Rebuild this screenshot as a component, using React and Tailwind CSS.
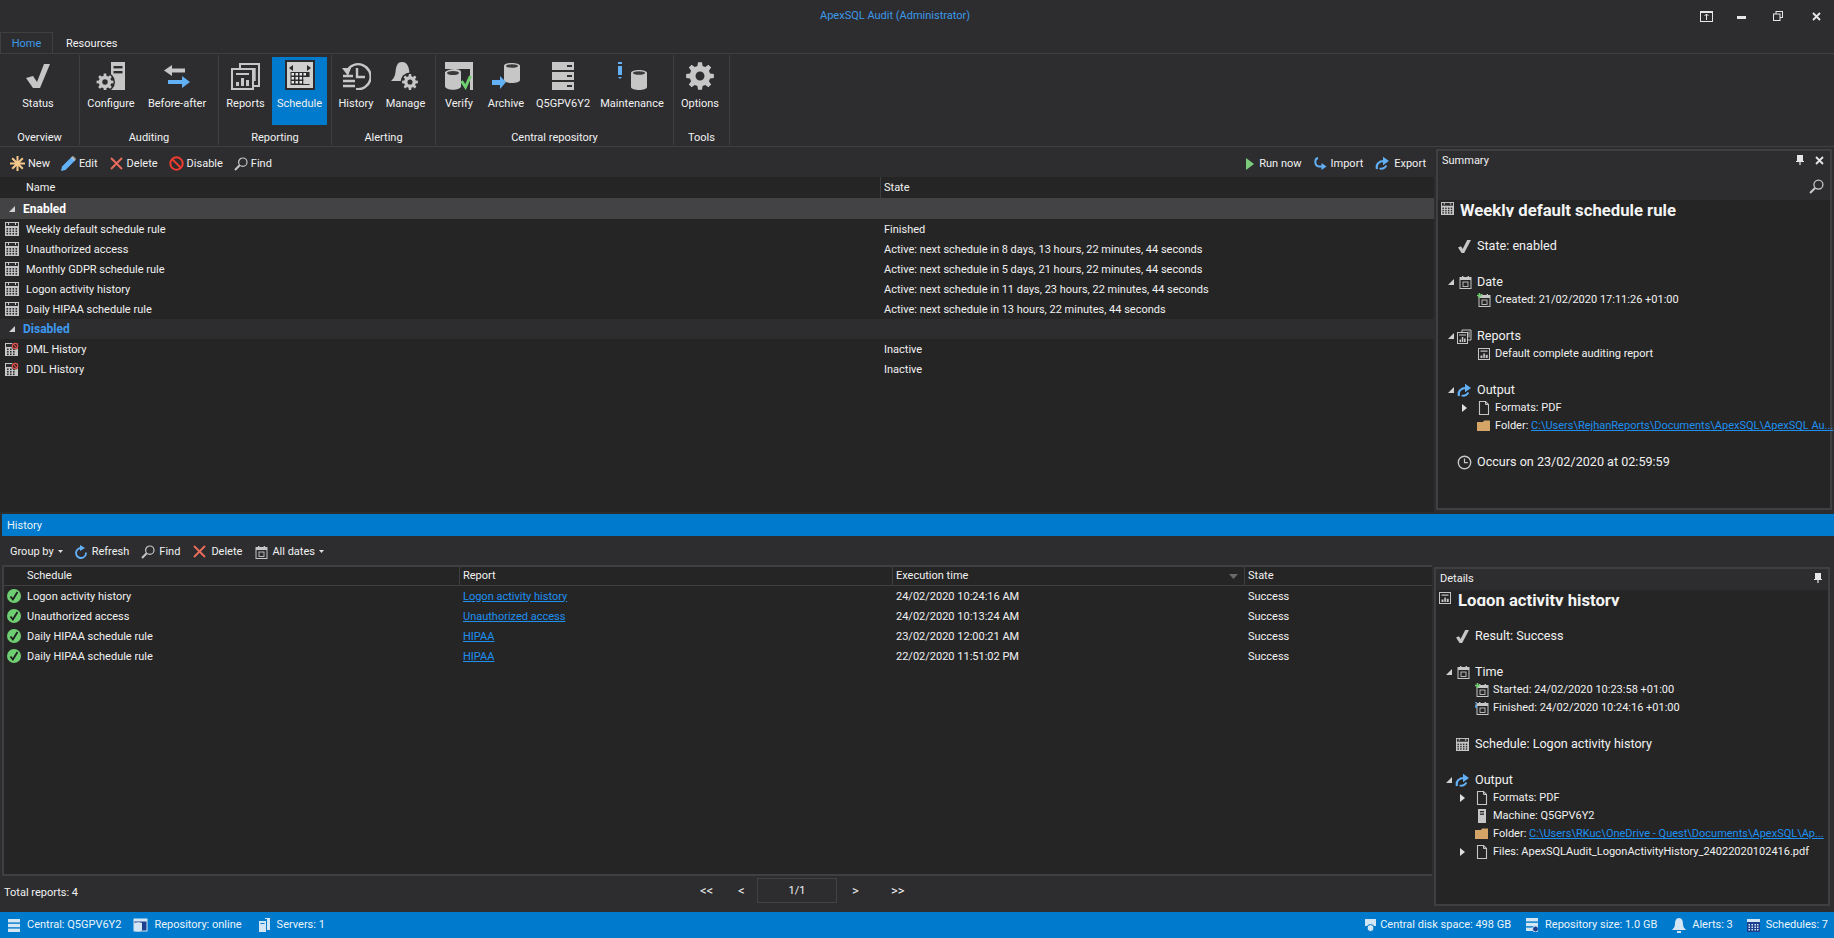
import React from "react";

const G = "#c6c6c6";
const B = "#62b1f6";
const D = "#2d2d30";

const Svg = ({ w = 16, h = 16, vb, children }) => (
  <svg width={w} height={h} viewBox={vb || `0 0 ${w} ${h}`} className="block shrink-0">{children}</svg>
);

const gearPath = (cx, cy, R, r, hole, teeth = 8) => {
  let d = "";
  const step = (Math.PI * 2) / teeth;
  for (let i = 0; i < teeth; i++) {
    const a = i * step - Math.PI / 2;
    const pts = [[r, a - step * 0.32], [R, a - step * 0.18], [R, a + step * 0.18], [r, a + step * 0.32]];
    pts.forEach(([q, t], j) => {
      d += `${i === 0 && j === 0 ? "M" : "L"}${(cx + q * Math.cos(t)).toFixed(2)} ${(cy + q * Math.sin(t)).toFixed(2)}`;
    });
  }
  d += `Z M${cx + hole} ${cy} a${hole} ${hole} 0 1 0 ${-2 * hole} 0 a${hole} ${hole} 0 1 0 ${2 * hole} 0Z`;
  return d;
};

const Gear = ({ cx, cy, r, color = G, halo }) => (
  <g>
    {halo && <circle cx={cx} cy={cy} r={r + 1.5} fill={halo} />}
    <path d={gearPath(cx, cy, r, r * 0.74, r * 0.32)} fill={color} fillRule="evenodd" />
  </g>
);

const Cyl = ({ x, y, w, h, color = G, top = "#3a3a3d" }) => (
  <g>
    <path d={`M${x} ${y + 3}v${h - 6}c0 4 ${w} 4 ${w} 0v-${h - 6}c0-4-${w}-4-${w} 0z`} fill={color} />
    <ellipse cx={x + w / 2} cy={y + 3} rx={w / 2 - 2} ry={1.8} fill={top} />
  </g>
);

const Calendar = ({ size = 14, dark = D, light = G }) => (
  <svg width={size} height={size} viewBox="0 0 14 14" className="block shrink-0">
    <rect x="0" y="0" width="14" height="14" fill={light} />
    <rect x="1" y="1" width="12" height="3" fill={dark} />
    <rect x="3" y="0" width="1" height="3" fill={light} />
    <rect x="10" y="0" width="1" height="3" fill={light} />
    <rect x="1" y="5" width="12" height="8" fill={light} />
    {[2, 5, 8, 11].map((x) => [6, 8.5, 11].map((y) => <rect key={x + "-" + y} x={x - 0.5} y={y} width="1.6" height="1.6" fill={dark} />))}
  </svg>
);

const CalDisabled = () => (
  <svg width="14" height="14" viewBox="0 0 14 14" className="block shrink-0">
    <rect x="0" y="1" width="13" height="13" fill={G} />
    <rect x="1" y="2" width="11" height="3" fill={D} />
    {[2, 5, 8].map((x) => [6.5, 9, 11.5].map((y) => <rect key={x + "-" + y} x={x} y={y} width="1.6" height="1.6" fill={D} />))}
    <circle cx="10" cy="4" r="3.4" fill="#252526" />
    <circle cx="10" cy="4" r="2.7" fill="none" stroke="#e4504a" strokeWidth="1.2" />
    <path d="M8.2 2.2l3.6 3.6" stroke="#e4504a" strokeWidth="1.1" />
  </svg>
);

const SmallCal = ({ plus, info }) => (
  <svg width="14" height="14" viewBox="0 0 14 14" className="block shrink-0">
    <rect x="2" y="2.5" width="11" height="11" fill="none" stroke={G} strokeWidth="1" />
    <rect x="2" y="2" width="11" height="3" fill={G} />
    <rect x="4" y="1" width="1.4" height="3" fill={G} /><rect x="9.6" y="1" width="1.4" height="3" fill={G} />
    <rect x="5" y="7" width="5" height="4.5" fill="none" stroke={G} strokeWidth="0.9" />
    {plus && <path d="M2.5 0v5M0 2.5h5" stroke="#6fcf6f" strokeWidth="1.6" />}
    {info && <path d="M1 1v1.2M1 3.5v3.5" stroke={B} strokeWidth="1.6" />}
  </svg>
);

const Doc = () => (
  <svg width="12" height="14" viewBox="0 0 12 14" className="block shrink-0">
    <path d="M1.5.5h6l3 3v10h-9z" fill="none" stroke={G} strokeWidth="1.1" />
    <path d="M7.5.5v3h3" fill="none" stroke={G} strokeWidth="1" />
  </svg>
);
const Folder = () => (
  <svg width="14" height="12" viewBox="0 0 14 12" className="block shrink-0">
    <path d="M0 2h6l1-1.5h6V11H0z" fill="#d4a566" />
  </svg>
);
const SmallReport = () => (
  <svg width="12" height="12" viewBox="0 0 12 12" className="block shrink-0">
    <rect x=".5" y=".5" width="11" height="11" fill="none" stroke={G} />
    <rect x="2.5" y="2.5" width="7" height="1.2" fill={G} />
    <rect x="2.5" y="7.5" width="2" height="2.5" fill={G} /><rect x="5.3" y="5.5" width="1.6" height="4.5" fill={G} /><rect x="7.7" y="6.8" width="2" height="3.2" fill={G} />
  </svg>
);
const Reports16 = () => (
  <svg width="15" height="15" viewBox="0 0 15 15" className="block shrink-0">
    <path d="M5 3V1h9v10h-3" fill="none" stroke={G} strokeWidth="1" />
    <path d="M12 2.5v6" stroke={G} strokeWidth="1" />
    <rect x=".5" y="3.5" width="10" height="11" fill="none" stroke={G} />
    <rect x="2" y="5.5" width="7" height="1" fill={G} />
    <rect x="2.5" y="10.5" width="1.6" height="2.5" fill={G} /><rect x="4.8" y="8" width="1.5" height="5" fill={G} /><rect x="7" y="9.5" width="1.6" height="3.5" fill={G} />
  </svg>
);
const ExportIcon = ({ s = 15 }) => (
  <svg width={s} height={s} viewBox="0 0 15 15" className="block shrink-0">
    <path d="M2 13C.8 8 4 5 9 5" fill="none" stroke={B} strokeWidth="2.2" />
    <path d="M8 .8L14 5l-6 4.2z" fill={B} />
    <path d="M4.5 12.5c3 .8 5.5-.5 7-3" fill="none" stroke={B} strokeWidth="1.8" />
  </svg>
);
const Clock = () => (
  <svg width="15" height="15" viewBox="0 0 15 15" className="block shrink-0">
    <circle cx="7.5" cy="7.5" r="6.2" fill="none" stroke={G} strokeWidth="1.4" />
    <path d="M7.5 3.5v4.2h3.3" fill="none" stroke={G} strokeWidth="1.2" />
  </svg>
);
const SmallCheck = () => (
  <svg width="13" height="13" viewBox="0 0 13 13" className="block shrink-0">
    <path d="M0 7.5L3 6.3 4.6 9 9.2 0H13L6.2 13H3.6z" fill={G} />
  </svg>
);
const SearchIco = ({ s = 14 }) => (
  <svg width={s} height={s} viewBox="0 0 14 14" className="block shrink-0">
    <circle cx="8.8" cy="5.2" r="4.2" fill="none" stroke={G} strokeWidth="1.2" />
    <path d="M5.7 8.3L1 13" stroke={G} strokeWidth="2" />
  </svg>
);
const XIco = ({ s = 15 }) => (
  <svg width={s} height={s} viewBox="0 0 15 15" className="block shrink-0">
    <path d="M2 2l11 11M13 2L2 13" stroke="#e86d5c" strokeWidth="1.9" />
  </svg>
);
const SuccessIco = () => (
  <svg width="14" height="14" viewBox="0 0 14 14" className="block shrink-0">
    <circle cx="7" cy="7" r="7" fill="#6fce72" />
    <path d="M3.5 7.5l2.4 3L10.5 3" fill="none" stroke="#1e1e1e" strokeWidth="1.8" />
  </svg>
);
const Pin = () => (
  <svg width="8" height="10" viewBox="0 0 8 10" className="block shrink-0">
    <path d="M1 0h6v6h1v1H4.6v3h-1.2V7H0V6h1z" fill="#e6e6e6" />
  </svg>
);
const CloseSm = () => (
  <svg width="9" height="9" viewBox="0 0 9 9" className="block shrink-0">
    <path d="M1 1l7 7M8 1L1 8" stroke="#e6e6e6" strokeWidth="1.8" />
  </svg>
);
const Caret = ({ open }) =>
  open ? (
    <svg width="6" height="6" viewBox="0 0 6 6" className="block shrink-0"><path d="M6 0v6H0z" fill="#d0d0d0" /></svg>
  ) : (
    <svg width="5" height="8" viewBox="0 0 5 8" className="block shrink-0"><path d="M0 0l5 4-5 4z" fill="#e0e0e0" /></svg>
  );
const DropCaret = () => (
  <svg width="5" height="3" viewBox="0 0 5 3" className="block shrink-0"><path d="M0 0h5L2.5 3z" fill="#e0e0e0" /></svg>
);

/* ribbon icons */
const IcoStatus = () => <Svg w={24} h={24}><path d="M0 14l7-2 4 6L18 0h6L14 24H7z" fill={G} /></Svg>;
const IcoConfigure = () => (
  <Svg w={30} h={28}>
    <path d="M15 0h14v28H15z" fill={G} />
    <rect x="17.5" y="4" width="9" height="2.4" fill={D} /><rect x="17.5" y="9" width="9" height="2.4" fill={D} />
    <Gear cx={9} cy={20} r={8.5} halo={D} />
  </Svg>
);
const IcoBefore = () => (
  <Svg w={28} h={23}>
    <path d="M9 0L1 5.5 9 11V7.500h13v-4H9z" fill={G} />
    <path d="M19 11l8 6-8 6V19H5v-4h14z" fill={B} />
  </Svg>
);
const IcoReports = () => (
  <Svg w={29} h={28}>
    <path d="M9 6V2h19v22h-6" fill="none" stroke={G} strokeWidth="2" />
    <path d="M23.5 6v13" stroke={G} strokeWidth="2.4" />
    <rect x="1" y="7" width="21" height="20" fill={D} stroke={G} strokeWidth="2" />
    <rect x="5" y="11" width="13" height="2" fill={G} />
    <rect x="5" y="20" width="3" height="4" fill={G} /><rect x="10" y="16" width="3" height="8" fill={G} /><rect x="15" y="18" width="3" height="6" fill={G} />
  </Svg>
);
const IcoSchedule = () => (
  <Svg w={30} h={30}>
    <rect width="30" height="30" fill="#2b2b2d" />
    <rect x="2" y="2" width="26" height="26" fill="#cfcfcf" />
    <path d="M8 5l-4 3 4 3zM22 5l4 3-4 3z" fill="#2b2b2d" />
    <rect x="5.5" y="12" width="19" height="13" fill="#2b2b2d" />
    {[6.5, 10.5, 14.5, 18.5].map((x) => [13, 17, 21].map((y) => <rect key={x + "-" + y} x={x} y={y} width="2.5" height="2.5" fill="#e6e6e6" />))}
    <rect x="18.5" y="17" width="6.5" height="7" fill="#cfcfcf" />
  </Svg>
);
const IcoHistory = () => (
  <Svg w={29} h={28}>
    <path d="M5 9a12.5 12.5 0 1 1 9 18" fill="none" stroke={G} strokeWidth="2.4" />
    <path d="M0 6l9 0-3 8z" fill={G} />
    <path d="M15 6v9h8" fill="none" stroke={G} strokeWidth="2.4" />
    <path d="M1 14h10M1 19h12M1 24h12" stroke={G} strokeWidth="2.4" />
  </Svg>
);
const IcoManage = () => (
  <Svg w={29} h={28}>
    <path d="M11 0c6 0 7 6 7.500 11 .5 4 3 6 4.500 8H0c3-3 4-5 4.500-9C5 5 6 0 11 0z" fill={G} />
    <circle cx="19" cy="20" r="9.500" fill={D} />
    <Gear cx={19} cy={20} r={8} />
  </Svg>
);
const IcoVerify = () => (
  <Svg w={28} h={28}>
    <path d="M0 0h28v28h-3V7H0z" fill={G} />
    <path d="M0 10c4-4 16-4 16 0v14c0 5-16 5-16 0z" fill={G} />
    <ellipse cx="8" cy="11" rx="6" ry="2" fill="#3a3a3d" />
    <path d="M16.500 19l4 6 5-11" fill="none" stroke="#6fcf6f" strokeWidth="3" />
  </Svg>
);
const IcoArchive = () => (
  <Svg w={28} h={28}>
    <Cyl x={12} y={1} w={16} h={20} />
    <path d="M8 14l6 6-6 7v-4H0v-5h8z" fill={B} />
  </Svg>
);
const IcoServers = () => (
  <Svg w={22} h={28}>
    {[0, 10, 20].map((y) => (
      <g key={y}><rect x="0" y={y} width="22" height="8" fill={G} /><rect x="15" y={y + 3} width="5" height="2" fill={D} /></g>
    ))}
  </Svg>
);
const IcoMaint = () => (
  <Svg w={30} h={28}>
    <rect x="1" y="0" width="4" height="2" fill={B} />
    <rect x="1" y="4" width="4" height="9" fill={B} />
    <path d="M1 15h4l-2 2z" fill={B} />
    <Cyl x={14} y={8} w={16} h={20} />
  </Svg>
);
const IcoOptions = () => <Svg w={28} h={28}><Gear cx={14} cy={14} r={14} /></Svg>;

const text = "text-[11px] leading-[16px] text-[#f1f1f1] whitespace-nowrap";

const RibBtn = ({ w, label, icon, active, top = "pt-[5px]" }) => (
  <div className={`${w} h-[68px] flex flex-col items-center ${active ? "bg-[#007acc]" : ""}`}>
    <div className={`h-[39px] ${top} flex items-start justify-center`}>{icon}</div>
    <div className={text}>{label}</div>
  </div>
);

const RibGroup = ({ w, label, children }) => (
  <div className={`${w} h-[90px] flex flex-col border-r border-[#3f3f42]`}>
    <div className="flex h-[68px] mt-[2px]">{children}</div>
    <div className={`${text} text-center mt-[5px]`}>{label}</div>
  </div>
);

const Ribbon = () => (
  <div className="h-[93px] flex border-b border-[#3f3f42] pt-[1px]">
    <RibGroup w="w-[80px]" label="Overview"><RibBtn w="w-[76px]" label="Status" icon={<IcoStatus />} top="pt-[7px]" /></RibGroup>
    <RibGroup w="w-[139px]" label="Auditing">
      <RibBtn w="w-[62px]" label="Configure" icon={<IcoConfigure />} />
      <RibBtn w="w-[70px]" label="Before-after" icon={<IcoBefore />} top="pt-[8px]" />
    </RibGroup>
    <RibGroup w="w-[113px]" label="Reporting">
      <RibBtn w="w-[53px]" label="Reports" icon={<IcoReports />} />
      <RibBtn w="w-[55px]" label="Schedule" icon={<IcoSchedule />} active top="pt-[3px]" />
    </RibGroup>
    <RibGroup w="w-[104px]" label="Alerting">
      <RibBtn w="w-[48px]" label="History" icon={<IcoHistory />} />
      <RibBtn w="w-[51px]" label="Manage" icon={<IcoManage />} />
    </RibGroup>
    <RibGroup w="w-[238px]" label="Central repository">
      <RibBtn w="w-[46px]" label="Verify" icon={<IcoVerify />} />
      <RibBtn w="w-[48px]" label="Archive" icon={<IcoArchive />} />
      <RibBtn w="w-[66px]" label="Q5GPV6Y2" icon={<IcoServers />} />
      <RibBtn w="w-[72px]" label="Maintenance" icon={<IcoMaint />} />
    </RibGroup>
    <RibGroup w="w-[56px]" label="Tools"><RibBtn w="w-[52px]" label="Options" icon={<IcoOptions />} /></RibGroup>
  </div>
);

const Tool = ({ icon, label, after, gap = "gap-[3px]" }) => (
  <div className={`flex items-center ${gap}`}>
    {icon}
    <span className={text}>{label}</span>
    {after}
  </div>
);

const NewIco = () => (
  <svg width="15" height="15" viewBox="0 0 15 15" className="block shrink-0">
    <path d="M7.500 0v15M0 7.500h15M2.200 2.200l10.600 10.600M12.800 2.200L2.200 12.800" stroke="#f3c98b" strokeWidth="2" />
  </svg>
);
const EditIco = () => (
  <svg width="15" height="15" viewBox="0 0 15 15" className="block shrink-0">
    <path d="M0 15l1-4.500L10.500 1l3.500 3.500L4.500 14z" fill={B} />
    <path d="M10 1.500l.8-.8a1.500 1.500 0 0 1 2.200 0l1.300 1.300a1.500 1.500 0 0 1 0 2.200l-.8.800z" fill="#f1f1f1" opacity=".6" />
  </svg>
);
const NoIco = () => (
  <svg width="15" height="15" viewBox="0 0 15 15" className="block shrink-0">
    <circle cx="7.500" cy="7.500" r="6.200" fill="none" stroke="#ee3b2f" strokeWidth="2" />
    <path d="M3 3l9 9" stroke="#ee3b2f" strokeWidth="2" />
  </svg>
);
const RunIco = () => (
  <svg width="10" height="12" viewBox="0 0 10 12" className="block shrink-0"><path d="M1 0l8 6-8 6z" fill="#7ccb7c" /></svg>
);
const ImportIco = () => (
  <svg width="13" height="13" viewBox="0 0 13 13" className="block shrink-0">
    <path d="M4 1C0 2 .5 9 5 9.500h3" fill="none" stroke={B} strokeWidth="1.900" />
    <path d="M7.500 6l5 3.500-5 3.500z" fill={B} />
  </svg>
);
const RefreshIco = () => (
  <svg width="13" height="14" viewBox="0 0 13 14" className="block shrink-0">
    <path d="M6 3A5 5 0 1 0 11 7.500" fill="none" stroke={B} strokeWidth="1.800" />
    <path d="M5 0l5 3-5 3z" fill={B} />
  </svg>
);

const Toolbar = () => (
  <div className="h-[30px] pt-[3px] flex items-center justify-between pl-[10px] pr-[10px]">
    <div className="flex items-center gap-[11px]">
      <Tool icon={<NewIco />} label="New" />
      <Tool icon={<EditIco />} label="Edit" />
      <Tool icon={<XIco />} label="Delete" />
      <Tool icon={<NoIco />} label="Disable" />
      <Tool icon={<SearchIco />} label="Find" />
    </div>
    <div className="flex items-center gap-[12px]">
      <Tool gap="gap-[4px]" icon={<RunIco />} label="Run now" />
      <Tool gap="gap-[4px]" icon={<ImportIco />} label="Import" />
      <Tool gap="gap-[4px]" icon={<ExportIcon />} label="Export" />
    </div>
  </div>
);

const SchedRow = ({ icon, name, state }) => (
  <div className="h-[20px] flex items-center">
    <div className="w-[26px] pl-[5px]">{icon}</div>
    <div className={`w-[858px] pt-[1px] ${text}`}>{name}</div>
    <div className={`pt-[1px] ${text}`}>{state}</div>
  </div>
);

const GroupRow = ({ label, cls, bg }) => (
  <div className={`flex items-center pl-[9px] gap-[8px] ${bg}`}>
    <Caret open />
    <span className={`text-[12px] leading-[16px] font-bold ${cls}`}>{label}</span>
  </div>
);

const ScheduleGrid = () => (
  <div className="flex-1 min-w-0 bg-[#252526] mr-[2px]">
    <div className="h-[21px] flex items-center">
      <div className={`w-[880px] pl-[26px] ${text}`}>Name</div>
      <div className={`${text} border-l border-[#3f3f42] h-full flex items-center pl-[3px]`}>State</div>
    </div>
    <GroupRow label="Enabled" cls="text-white" bg="bg-[#434345] h-[21px]" />
    <SchedRow icon={<Calendar />} name="Weekly default schedule rule" state="Finished" />
    <SchedRow icon={<Calendar />} name="Unauthorized access" state="Active: next schedule in 8 days, 13 hours, 22 minutes, 44 seconds" />
    <SchedRow icon={<Calendar />} name="Monthly GDPR schedule rule" state="Active: next schedule in 5 days, 21 hours, 22 minutes, 44 seconds" />
    <SchedRow icon={<Calendar />} name="Logon activity history" state="Active: next schedule in 11 days, 23 hours, 22 minutes, 44 seconds" />
    <SchedRow icon={<Calendar />} name="Daily HIPAA schedule rule" state="Active: next schedule in 13 hours, 22 minutes, 44 seconds" />
    <GroupRow label="Disabled" cls="text-[#3d99f0]" bg="bg-[#2d2d30] h-[20px]" />
    <SchedRow icon={<CalDisabled />} name="DML History" state="Inactive" />
    <SchedRow icon={<CalDisabled />} name="DDL History" state="Inactive" />
  </div>
);

const Tree = ({ level = 0, caret, icon, big, children }) => (
  <div className={`h-[18px] flex items-center ${big ? "text-[12.6px]" : "text-[11px]"} leading-[18px] text-[#f1f1f1] whitespace-nowrap`}>
    <div className={level === 0 ? "w-[19px] flex items-center pl-[10px] shrink-0" : "w-[38px] flex items-center justify-end pr-[9px] shrink-0"}>
      {caret === "open" && <Caret open />}
      {caret === "closed" && <Caret />}
    </div>
    <div className="w-[15px] flex justify-center shrink-0">{icon}</div>
    <div className={level === 0 ? "ml-[5px]" : "ml-[4px]"}>{children}</div>
  </div>
);
const Blank = () => <div className="h-[18px]" />;
const Lnk = ({ children }) => <span className="text-[#1e90f0] underline">{children}</span>;

const PanelHead = ({ title, close }) => (
  <div className="h-[21px] flex items-start justify-between pl-[4px] pr-[6px] pt-[2px]">
    <span className={text}>{title}</span>
    <div className="flex items-center gap-[11px] pt-[2px]"><Pin />{close && <CloseSm />}</div>
  </div>
);

const PanelTitle = ({ icon, h, children }) => (
  <div className={`${h} flex items-start pl-[3px] overflow-hidden`}>
    <div className="mt-[2px] w-[15px] shrink-0">{icon}</div>
    <div className="ml-[4px] text-[16.7px] leading-[21px] font-bold text-[#f4f4f4] whitespace-nowrap">{children}</div>
  </div>
);

const Summary = () => (
  <div className="w-[396px] shrink-0 h-[361px] border-2 border-[#3f3f42] flex flex-col mr-[2px]">
    <PanelHead title="Summary" close />
    <div className="h-[28px] flex items-center justify-end pr-[6px]"><SearchIco s={15} /></div>
    <div className="flex-1 bg-[#252526]">
      <PanelTitle h="h-[17px] mb-[2px]" icon={<Calendar size={13} />}>Weekly default schedule rule</PanelTitle>
      <Blank />
      <Tree big icon={<SmallCheck />}>State: enabled</Tree>
      <Blank />
      <Tree big caret="open" icon={<SmallCal />}>Date</Tree>
      <Tree level={1} icon={<SmallCal plus />}>Created: 21/02/2020 17:11:26 +01:00</Tree>
      <Blank />
      <Tree big caret="open" icon={<Reports16 />}>Reports</Tree>
      <Tree level={1} icon={<SmallReport />}>Default complete auditing report</Tree>
      <Blank />
      <Tree big caret="open" icon={<ExportIcon />}>Output</Tree>
      <Tree level={1} caret="closed" icon={<Doc />}>Formats: PDF</Tree>
      <Tree level={1} icon={<Folder />}>Folder: <Lnk>C:\Users\RejhanReports\Documents\ApexSQL\ApexSQL Au...</Lnk></Tree>
      <Blank />
      <Tree big icon={<Clock />}>Occurs on 23/02/2020 at 02:59:59</Tree>
    </div>
  </div>
);

const Tower = ({ c = G }) => (
  <svg width="8" height="14" viewBox="0 0 8 14" className="block shrink-0">
    <rect width="8" height="14" fill={c} />
    <rect x="2" y="2" width="4" height="1.300" fill="#252526" /><rect x="2" y="4.500" width="4" height="1.300" fill="#252526" />
  </svg>
);

const Details = () => (
  <div className="w-[396px] shrink-0 h-[339px] border-2 border-[#3f3f42] flex flex-col">
    <PanelHead title="Details" />
    <div className="flex-1 bg-[#252526]">
      <PanelTitle h="h-[16px] mb-[3px]" icon={<SmallReport />}>Logon activity history</PanelTitle>
      <Blank />
      <Tree big icon={<SmallCheck />}>Result: Success</Tree>
      <Blank />
      <Tree big caret="open" icon={<SmallCal />}>Time</Tree>
      <Tree level={1} icon={<SmallCal plus />}>Started: 24/02/2020 10:23:58 +01:00</Tree>
      <Tree level={1} icon={<SmallCal info />}>Finished: 24/02/2020 10:24:16 +01:00</Tree>
      <Blank />
      <Tree big icon={<Calendar size={13} />}>Schedule: Logon activity history</Tree>
      <Blank />
      <Tree big caret="open" icon={<ExportIcon />}>Output</Tree>
      <Tree level={1} caret="closed" icon={<Doc />}>Formats: PDF</Tree>
      <Tree level={1} icon={<Tower />}>Machine: Q5GPV6Y2</Tree>
      <Tree level={1} icon={<Folder />}>Folder: <Lnk>C:\Users\RKuc\OneDrive - Quest\Documents\ApexSQL\Ap...</Lnk></Tree>
      <Tree level={1} caret="closed" icon={<Doc />}>Files: ApexSQLAudit_LogonActivityHistory_24022020102416.pdf</Tree>
    </div>
  </div>
);

const HistRow = ({ name, report, time }) => (
  <div className="h-[20px] flex items-center">
    <div className="w-[23px] pl-[3px]"><SuccessIco /></div>
    <div className={`w-[436px] pt-[1px] ${text}`}>{name}</div>
    <div className={`w-[433px] pt-[1px] ${text}`}><Lnk>{report}</Lnk></div>
    <div className={`w-[352px] pt-[1px] ${text}`}>{time}</div>
    <div className={`pt-[1px] ${text}`}>Success</div>
  </div>
);

const HCol = ({ w, children, extra = "" }) => (
  <div className={`${w} h-full flex items-center border-r border-[#3f3f42] ${text} ${extra}`}>{children}</div>
);

const HistoryLeft = () => (
  <div className="flex-1 min-w-0 flex flex-col mr-[2px]">
    <div className="h-[29px] pt-[2px] flex items-center pl-[10px] gap-[12px]">
      <Tool gap="gap-[4px]" icon={null} label="Group by" after={<DropCaret />} />
      <Tool gap="gap-[4px]" icon={<RefreshIco />} label="Refresh" />
      <Tool gap="gap-[4px]" icon={<SearchIco />} label="Find" />
      <Tool gap="gap-[4px]" icon={<XIco />} label="Delete" />
      <Tool gap="gap-[4px]" icon={<SmallCal />} label="All dates" after={<DropCaret />} />
    </div>
    <div className="h-[311px] bg-[#252526] border-2 border-[#3f3f42] border-r-0 ml-[2px]">
      <div className="h-[19px] flex items-center border-b border-[#3f3f42]">
        <HCol w="w-[456px]" extra="pl-[23px]">Schedule</HCol>
        <HCol w="w-[433px]" extra="pl-[3px]">Report</HCol>
        <HCol w="w-[352px]" extra="pl-[3px] justify-between pr-[6px]">
          Execution time
          <svg width="9" height="5" viewBox="0 0 9 5" className="block"><path d="M0 0h9L4.500 5z" fill="#6a6a6e" /></svg>
        </HCol>
        <div className={`pl-[3px] ${text}`}>State</div>
      </div>
      <HistRow name="Logon activity history" report="Logon activity history" time="24/02/2020 10:24:16 AM" />
      <HistRow name="Unauthorized access" report="Unauthorized access" time="24/02/2020 10:13:24 AM" />
      <HistRow name="Daily HIPAA schedule rule" report="HIPAA" time="23/02/2020 12:00:21 AM" />
      <HistRow name="Daily HIPAA schedule rule" report="HIPAA" time="22/02/2020 11:51:02 PM" />
    </div>
    <div className="h-[34px] flex items-center pl-[4px]">
      <span className={text}>Total reports: 4</span>
      <div className="flex-1" />
      <div className="flex items-center w-[215px] mr-[517px] mb-[5px] text-[13px] leading-[16px] text-[#f1f1f1] whitespace-nowrap">
        <span className="w-[36px] pl-[0px]">&lt;&lt;</span>
        <span className="w-[21px] pl-[2px]">&lt;</span>
        <div className={`w-[80px] h-[25px] border border-[#434346] flex items-center justify-center ${text}`}>1/1</div>
        <span className="w-[54px] pl-[15px]">&gt;</span>
        <span>&gt;&gt;</span>
      </div>
    </div>
  </div>
);

const StatusItem = ({ icon, label, gap = "gap-[7px]", extra = "" }) => (
  <div className={`flex items-center ${gap} ${extra}`}>{icon}<span className="text-[11px] leading-[16px] text-[#eaf4fb] whitespace-nowrap">{label}</span></div>
);

const W = "#d4e6f3";
const StServer = () => (
  <svg width="12" height="13" viewBox="0 0 12 13" className="block shrink-0">
    {[0, 4.800, 9.600].map((y) => <rect key={y} x="0" y={y} width="12" height="3.400" fill={W} />)}
  </svg>
);
const StRepo = () => (
  <svg width="15" height="14" viewBox="0 0 15 14" className="block shrink-0">
    <rect x="1" y="1" width="13" height="12" fill="#1d3f8f" stroke={W} strokeWidth="1" />
    <rect x="1" y="1" width="13" height="2.500" fill={W} />
    <path d="M1 5c2-1 7-1 8 0v7c-1 2-7 2-8 0z" fill={W} />
  </svg>
);
const StTowers = () => (
  <svg width="11" height="14" viewBox="0 0 11 14" className="block shrink-0">
    <rect x="0" y="3" width="7" height="11" fill={W} />
    <rect x="1.500" y="5" width="4" height="1" fill="#007acc" />
    <rect x="8" y="0" width="3" height="12" fill={W} />
    <rect x="6" y="0" width="5" height="1" fill={W} />
  </svg>
);
const StDisk = () => (
  <svg width="13" height="14" viewBox="0 0 13 14" className="block shrink-0">
    <path d="M1 1h11v7H1z" fill={W} /><circle cx="6.500" cy="10" r="3.500" fill={W} stroke="#007acc" />
  </svg>
);
const StRepoSize = () => (
  <svg width="12" height="14" viewBox="0 0 12 14" className="block shrink-0">
    {[0, 4.800, 9.600].map((y) => <rect key={y} x="0" y={y} width="12" height="3.400" fill={W} />)}
    <circle cx="9.500" cy="11" r="3" fill="#1d3f8f" stroke={W} />
  </svg>
);
const StBell = () => (
  <svg width="14" height="15" viewBox="0 0 14 15" className="block shrink-0">
    <path d="M7 0c3 0 4 3 4 6 0 3 1.500 4 3 6H0c1.500-2 3-3 3-6 0-3 1-6 4-6z" fill={W} />
    <rect x="5" y="13" width="4" height="2" fill={W} />
  </svg>
);
const StCal = () => (
  <svg width="13" height="13" viewBox="0 0 13 13" className="block shrink-0">
    <rect width="13" height="13" fill="#1d3f8f" />
    <rect width="13" height="3" fill={W} />
    {[1.500, 4.500, 7.500, 10].map((x) => [5, 7.500, 10].map((y) => <rect key={x + "-" + y} x={x} y={y} width="1.500" height="1.500" fill={W} />))}
  </svg>
);

const WinControls = () => (
  <div className="flex items-center pr-[13px]">
    <svg width="13" height="11" viewBox="0 0 13 11" className="block">
      <rect x=".5" y=".5" width="12" height="10" fill="none" stroke="#e6e6e6" />
      <rect x="0" y="0" width="13" height="2" fill="#e6e6e6" />
      <path d="M6.500 3v6M4.500 5l2-2 2 2" fill="none" stroke="#e6e6e6" />
    </svg>
    <svg width="9" height="3" viewBox="0 0 9 3" className="block mt-[3px] ml-[24px]"><rect width="9" height="3" fill="#e6e6e6" /></svg>
    <svg width="10" height="10" viewBox="0 0 10 10" className="block ml-[27px]">
      <rect x="3" y=".5" width="6.500" height="6" fill="none" stroke="#e6e6e6" strokeWidth="1" />
      <rect x=".5" y="3" width="6.500" height="6.500" fill="#2d2d30" stroke="#e6e6e6" strokeWidth="1" />
    </svg>
    <svg width="9" height="9" viewBox="0 0 9 9" className="block ml-[29px]">
      <path d="M1 1l7 7M8 1L1 8" stroke="#e6e6e6" strokeWidth="1.800" />
    </svg>
  </div>
);

export default function App() {
  return (
    <div className="w-[1834px] h-[938px] overflow-hidden bg-[#2d2d30] flex flex-col font-['Roboto',sans-serif]">
      {/* title */}
      <div className="h-[32px] flex items-center justify-between">
        <div className="pl-[820px] pt-[1px] text-[11px] text-[#3d99e8] whitespace-nowrap">ApexSQL Audit (Administrator)</div>
        <WinControls />
      </div>
      <div className="h-[22px] flex border-b border-[#3f3f42]">
        <div className="w-[53px] h-[21px] border border-b-0 border-[#3f3f42] flex items-center justify-center pt-[2px] text-[11px] text-[#3d99e8]">Home</div>
        <div className={`${text} ml-[13px] pt-[4px]`}>Resources</div>
      </div>
      <Ribbon />
      {/* upper */}
      <div className="flex h-[365px]">
        <div className="flex-1 min-w-0 flex flex-col">
          <Toolbar />
          <ScheduleGrid />
        </div>
        <div className="pt-[2px]"><Summary /></div>
      </div>
      {/* history bar */}
      <div className="h-[22px] bg-[#007acc] flex items-center pl-[5px] pt-[2px] ml-[2px] mt-[2px]">
        <span className="text-[11px] text-[#e9f4fb]">History</span>
      </div>
      <div className="flex flex-1 min-h-0">
        <HistoryLeft />
        <div className="pt-[31px] pr-[4px]"><Details /></div>
      </div>
      {/* status */}
      <div className="h-[26px] bg-[#007acc] flex items-center justify-between pl-[8px] pr-[6px]">
        <div className="flex items-center">
          <StatusItem icon={<StServer />} label="Central: Q5GPV6Y2" />
          <StatusItem icon={<StRepo />} label="Repository: online" gap="gap-[6px]" extra="ml-[12px]" />
          <StatusItem icon={<StTowers />} label="Servers: 1" extra="ml-[17px]" />
        </div>
        <div className="flex items-center">
          <StatusItem icon={<StDisk />} label="Central disk space: 498 GB" gap="gap-[3px]" />
          <StatusItem icon={<StRepoSize />} label="Repository size: 1.0 GB" extra="ml-[15px]" />
          <StatusItem icon={<StBell />} label="Alerts: 3" gap="gap-[6px]" extra="ml-[15px]" />
          <StatusItem icon={<StCal />} label="Schedules: 7" gap="gap-[6px]" extra="ml-[14px]" />
        </div>
      </div>
    </div>
  );
}
